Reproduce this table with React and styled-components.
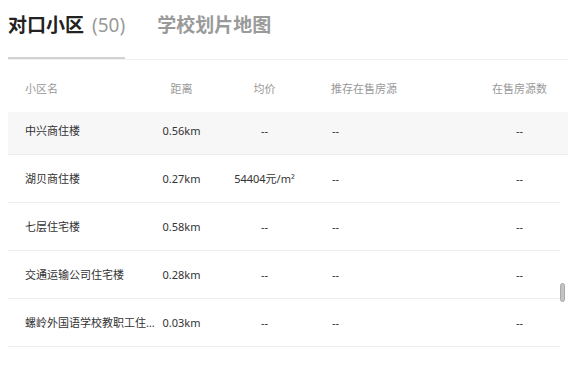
import React, { useEffect, useRef } from "react";
import styled, { createGlobalStyle } from "styled-components";

const Global = createGlobalStyle`
  html, body { margin: 0; padding: 0; background: #fff; }
  body { font-family: "Noto Sans", "Noto Sans CJK SC", sans-serif; }
`;

const Page = styled.div`
  width: 580px;
  height: 370px;
  box-sizing: border-box;
  padding: 0 12px 0 8px;
  overflow: hidden;
  display: flex;
  flex-direction: column;
`;

const TabBar = styled.div`
  display: flex;
  gap: 32px;
  height: 59px;
  border-bottom: 1px solid #efefef;
  flex-shrink: 0;
`;

const Tab = styled.div`
  box-sizing: border-box;
  height: 59px;
  padding-top: 12px;
  font-family: "Noto Sans", "Noto Sans CJK SC", sans-serif;
  font-size: 19px;
  line-height: 27px;
  font-weight: 700;
  color: ${(p) => (p.$active ? "#222" : "#9a9a9a")};
  border-bottom: 2px solid ${(p) => (p.$active ? "#d2d2d2" : "transparent")};
  white-space: nowrap;
`;

const Count = styled.span`
  font-weight: 400;
  color: #9a9a9a;
  margin-left: 8px;
`;

const cols = "153px 41px 125px 152px 81px";

const HeaderRow = styled.div`
  display: grid;
  grid-template-columns: ${cols};
  align-items: center;
  box-sizing: border-box;
  width: 552px;
  height: 52px;
  padding-top: 5px;
  font-size: 11px;
  line-height: 16px;
  color: #999;
  flex-shrink: 0;
`;

const Cell = styled.div`
  text-align: ${(p) => p.$align || "center"};
  padding-left: ${(p) => p.$pad || 0}px;
  white-space: nowrap;
  overflow: visible;
`;

const NameCell = styled.div`
  padding-left: 17px;
  padding-right: 6px;
  white-space: nowrap;
  overflow: hidden;
  text-overflow: ellipsis;
  min-width: 0;
`;

const Body = styled.div`
  position: relative;
  flex: 1;
  min-height: 0;
`;

const Scroller = styled.div`
  height: 100%;
  overflow: hidden;
`;

const List = styled.div`
  padding-bottom: 48px;
`;

const Row = styled.div`
  display: grid;
  grid-template-columns: ${cols};
  align-items: center;
  height: 48px;
  box-sizing: border-box;
  border-bottom: 1px solid #ededed;
  font-size: 11px;
  line-height: 16px;
  color: #333;
  background: ${(p) => (p.$active ? "#f7f7f7" : "#fff")};
  padding-right: ${(p) => (p.$active ? 8 : 0)}px;
  width: ${(p) => (p.$active ? 560 : 552)}px;
`;

const Thumb = styled.div`
  position: absolute;
  right: 3px;
  top: 171px;
  width: 5px;
  height: 19px;
  border-radius: 3px;
  background: #c4c4c4;
  border: 1px solid #a9a9a9;
  box-sizing: border-box;
`;

const rows = [
  { name: "中兴商住楼", dist: "0.56km", price: "--", rec: "--", count: "--", active: true },
  { name: "湖贝商住楼", dist: "0.27km", price: "54404元/m²", rec: "--", count: "--" },
  { name: "七层住宅楼", dist: "0.58km", price: "--", rec: "--", count: "--" },
  { name: "交通运输公司住宅楼", dist: "0.28km", price: "--", rec: "--", count: "--" },
  { name: "螺岭外国语学校教职工住宅楼", dist: "0.03km", price: "--", rec: "--", count: "--" },
];

export default function App() {
  const ref = useRef(null);
  useEffect(() => {
    if (ref.current) ref.current.scrollTop = 5;
  }, []);
  return (
    <>
      <Global />
      <Page>
        <TabBar>
          <Tab $active>
            对口小区<Count>(50)</Count>
          </Tab>
          <Tab>学校划片地图</Tab>
        </TabBar>
        <HeaderRow>
          <NameCell>小区名</NameCell>
          <Cell>距离</Cell>
          <Cell>均价</Cell>
          <Cell $align="left" $pad={4}>推存在售房源</Cell>
          <Cell>在售房源数</Cell>
        </HeaderRow>
        <Body>
          <Scroller ref={ref}>
            <List>
              {rows.map((r) => (
                <Row key={r.name} $active={r.active}>
                  <NameCell>{r.name}</NameCell>
                  <Cell>{r.dist}</Cell>
                  <Cell>{r.price}</Cell>
                  <Cell $align="left" $pad={5}>{r.rec}</Cell>
                  <Cell>{r.count}</Cell>
                </Row>
              ))}
            </List>
          </Scroller>
          <Thumb />
        </Body>
      </Page>
    </>
  );
}
